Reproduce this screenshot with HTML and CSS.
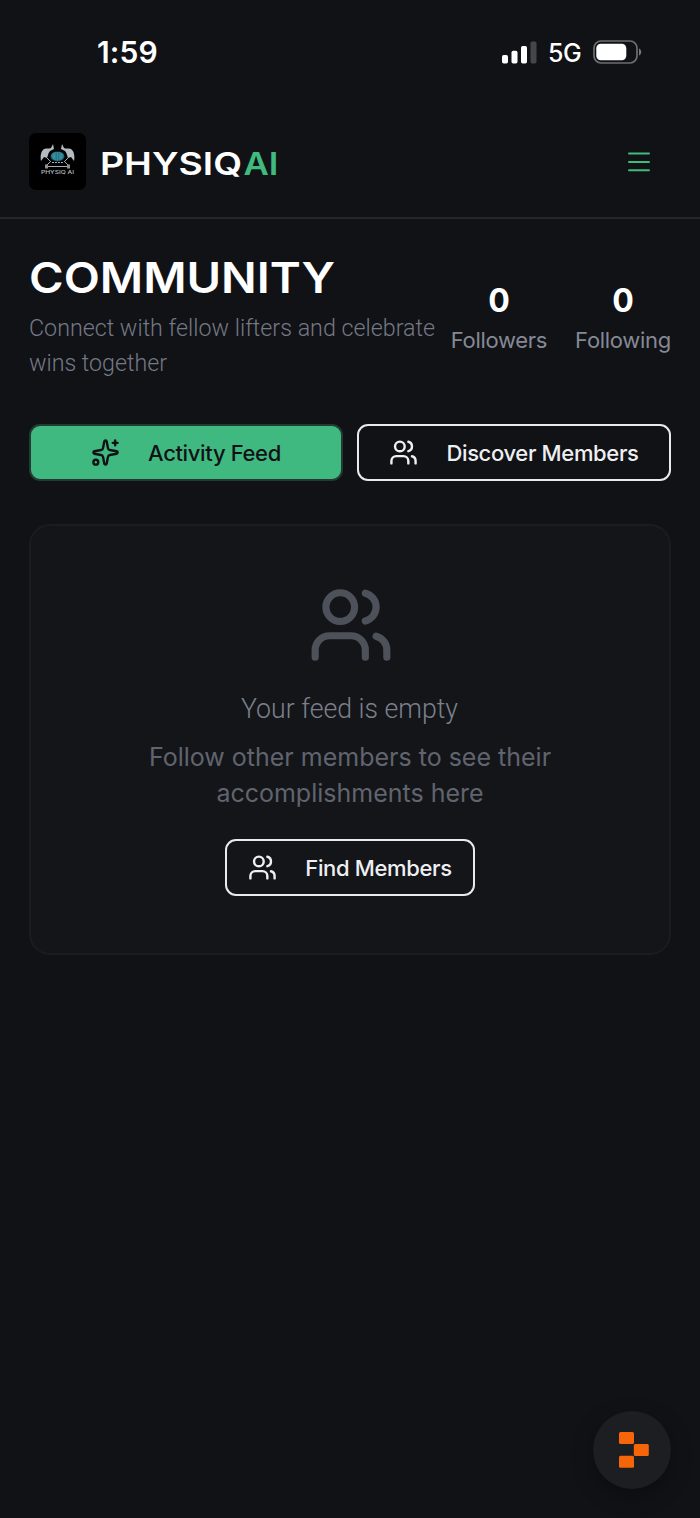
FILE: index.html
```html
<!DOCTYPE html>
<html lang="en">
<head>
<meta charset="utf-8">
<title>PhysiqAI – Community</title>
<link rel="stylesheet" href="styles.css">
</head>
<body>
<svg class="defs" width="0" height="0" aria-hidden="true">
  <symbol id="users" viewBox="0 0 24 24"><g fill="none" stroke="currentColor" stroke-width="2" stroke-linecap="round" stroke-linejoin="round"><path d="M16 21v-2a4 4 0 0 0-4-4H6a4 4 0 0 0-4 4v2"/><circle cx="9" cy="7" r="4"/><path d="M22 21v-2a4 4 0 0 0-3-3.87"/><path d="M16 3.13a4 4 0 0 1 0 7.75"/></g></symbol>
</svg>
<div class="status">
  <span class="time">1:59</span>
  <div class="signals">
    <svg width="35" height="23" viewBox="0 0 35 23" fill="#fff"><rect x="0" y="14" width="6" height="8.5" rx="1.7"/><rect x="9.5" y="9.7" width="6" height="12.8" rx="1.7"/><rect x="19" y="5" width="6" height="17.5" rx="1.7"/><rect x="28.5" y="0.5" width="6" height="22" rx="1.7" fill="#454649"/></svg>
    <span class="net">5G</span>
    <svg width="49" height="24" viewBox="0 0 49 24"><rect x="1" y="1" width="43" height="22" rx="7" fill="none" stroke="#6d6e71" stroke-width="1.7"/><rect x="3.3" y="3.7" width="30" height="16.6" rx="4.5" fill="#fff"/><path d="M46 8.5c3 1.3 3 5.700 0 7z" fill="#77787a"/></svg>
  </div>
</div>
<header class="header">
  <div class="logo">
    <svg width="57" height="57" viewBox="0 0 57 57">
      <g fill="#b4bcc1">
        <path d="M24 11l1 5-4 2c-2 2-2 5-3 7l-3-1-3 4c-1-5 0-10 3-12 3-1 5 0 7-1z"/>
        <path d="M33 11l-1 5 4 2c2 2 2 5 3 7l3-1 3 4c1-5 0-10-3-12-3-1-5 0-7-1z"/>
      </g>
      <g fill="none" stroke="#a4adb3" stroke-width="1"><path d="M18 25l4 4M39 25l-4 4M21 29l-3 3M36 29l3 3M18 33.500h21"/><path d="M23 29.500h11" stroke-dasharray="2 1"/></g>
      <path d="M16 31.500h3v4h-3zM38 31.500h3v4h-3z" fill="#899198"/>
      <ellipse cx="28.500" cy="23.500" rx="7" ry="5" fill="#174a58"/>
      <path d="M27.800 19c-4 0-6 2-5.500 4.500s3 4 5.500 4zM29.200 19c4 0 6 2 5.500 4.500s-3 4-5.500 4z" fill="#2c8296"/>
      <path d="M25 21.500v4M28.500 19v9M32 21.500v4" stroke="#5fb4c4" stroke-width=".6"/>
      <text class="logo-text" x="12" y="41" textLength="33" lengthAdjust="spacingAndGlyphs">PHYSIQ AI</text>
    </svg>
  </div>
  <svg class="wordmark" width="184" height="48" viewBox="0 0 184 48">
    <text class="word" x="0" y="35.500" textLength="142" lengthAdjust="spacingAndGlyphs">PHYSIQ</text>
    <text class="word ai" x="143.500" y="35.500" textLength="35" lengthAdjust="spacingAndGlyphs">AI</text>
  </svg>
  <svg class="menu" width="22" height="22" viewBox="0 0 22 22" stroke="#3fbb80" stroke-width="2" stroke-linecap="round"><path d="M1 2.500h20M1 11h20M1 19.300h20"/></svg>
</header>
<main class="main">
  <section class="intro">
    <div class="intro-copy">
      <svg class="heading" width="312" height="64" viewBox="0 0 312 64"><text class="title" x="0" y="46.500" textLength="306" lengthAdjust="spacingAndGlyphs">COMMUNITY</text></svg>
      <svg class="tagline" width="412" height="76" viewBox="0 0 412 76"><text class="sub" x="0" y="29.500" textLength="406" lengthAdjust="spacingAndGlyphs">Connect with fellow lifters and celebrate</text><text class="sub" x="0" y="65" textLength="138" lengthAdjust="spacingAndGlyphs">wins together</text></svg>
    </div>
    <div class="stats">
      <div class="stat"><strong>0</strong><span>Followers</span></div>
      <div class="stat"><strong>0</strong><span>Following</span></div>
    </div>
  </section>
  <nav class="tabs">
    <button class="btn active"><svg class="ico" viewBox="0 0 24 24" fill="none" stroke="currentColor" stroke-width="2" stroke-linecap="round" stroke-linejoin="round"><path d="M11.017 2.814a1 1 0 0 1 1.966 0l1.051 5.558a2 2 0 0 0 1.594 1.594l5.558 1.051a1 1 0 0 1 0 1.966l-5.558 1.051a2 2 0 0 0-1.594 1.594l-1.051 5.558a1 1 0 0 1-1.966 0l-1.051-5.558a2 2 0 0 0-1.594-1.594l-5.558-1.051a1 1 0 0 1 0-1.966l5.558-1.051a2 2 0 0 0 1.594-1.594z"/><path d="M20 2v4M22 4h-4"/><circle cx="4" cy="20" r="2"/></svg><span>Activity Feed</span></button>
    <button class="btn"><svg class="ico"><use href="#users"/></svg><span>Discover Members</span></button>
  </nav>
  <section class="card">
    <svg class="big"><use href="#users"/></svg>
    <svg class="empty" width="220" height="44" viewBox="0 0 220 44"><text class="empty-title" x="1" y="29" textLength="217" lengthAdjust="spacingAndGlyphs">Your feed is empty</text></svg>
    <p class="hint">Follow other members to see their<br>accomplishments here</p>
    <button class="btn find"><svg class="ico"><use href="#users"/></svg><span>Find Members</span></button>
  </section>
</main>
<div class="fab"><svg width="30" height="36" viewBox="0 0 30 36" fill="#f66508"><rect x="0" y="0" width="15" height="12" rx="1.500"/><rect x="14.800" y="12" width="15" height="12" rx="1.500"/><rect x="0" y="23.800" width="15" height="12" rx="1.500"/></svg></div>
</body>
</html>
```
FILE: styles.css
```css
* { box-sizing: border-box; }
body { margin: 0; height: 1518px; background: #111216; color: #fff; font-family: Inter, sans-serif; overflow: hidden; }
.defs { position: absolute; }
svg { display: block; flex: none; }
.status { height: 105px; padding: 0 58px 0 97px; display: flex; align-items: center; justify-content: space-between; }
.time { font-size: 30px; font-weight: 600; letter-spacing: .1px; margin-top: -1px; }
.signals { display: flex; align-items: center; margin-top: -1px; }
.net { width: 33px; margin: 2px 12px 0 11px; font-size: 25px; font-weight: 500; letter-spacing: -.5px; white-space: nowrap; }
.header { height: 114px; border-bottom: 2px solid #25262b; padding: 0 50px 0 29px; display: flex; align-items: center; }
.logo { width: 57px; height: 57px; border-radius: 7px; background: #000; overflow: hidden; }
.logo-text { font: 500 5px Inter, sans-serif; fill: #b9bdc0; }
.wordmark { margin: 3px 0 0 14px; }
.word { font: 600 31.500px Inter, sans-serif; fill: #fff; }
.word.ai { fill: #3fbb80; }
.menu { margin: 2px 0 0 auto; }
.main { padding: 27px 29px 0; }
.intro { height: 178px; display: flex; justify-content: space-between; }
.intro-copy { flex: none; width: 412px; }
.heading { margin-bottom: -4px; }
.title { font: 600 43px Inter, sans-serif; fill: #fff; }
.sub { font: 300 24px Roboto, sans-serif; fill: #747985; }
.stats { display: flex; gap: 28px; padding-top: 35px; }
.stat { display: flex; flex-direction: column; align-items: center; }
.stat strong { font-size: 32px; line-height: 40px; font-weight: 700; }
.stat span { font-size: 22px; line-height: 38px; letter-spacing: -.3px; color: #858995; }
.tabs { display: grid; grid-template-columns: 1fr 1fr; gap: 14px; }
.btn { height: 57px; border: 2px solid #e9eaed; border-radius: 11px; background: transparent; color: #eeeff2; font: 500 22px Inter, sans-serif; letter-spacing: -.35px; display: flex; align-items: center; justify-content: center; gap: 28px; padding: 0; white-space: nowrap; }
.btn.active { background: #40b981; border-color: #213b32; color: #111216; }
.ico { width: 29px; height: 29px; }
.card { margin-top: 43px; height: 431px; border: 2px solid #1b1c20; border-radius: 21px; background: #141519; display: flex; flex-direction: column; align-items: center; padding-top: 56px; }
.big { width: 86px; height: 86px; margin-left: 2px; color: #4d515a; }
.empty { margin-top: 21px; }
.empty-title { font: 300 27px Roboto, sans-serif; fill: #7b808b; }
.hint { margin: 7px 0 0; text-align: center; color: #60646e; font-size: 25px; line-height: 35.600px; }
.find { width: 250px; margin-top: 28px; }
.fab { position: absolute; left: 593px; top: 1411px; width: 78px; height: 78px; border-radius: 50%; background: #1d1e22; display: flex; align-items: center; justify-content: center; padding-left: 4px; box-shadow: 0 7px 22px rgba(0, 0, 0, .3); }
```
